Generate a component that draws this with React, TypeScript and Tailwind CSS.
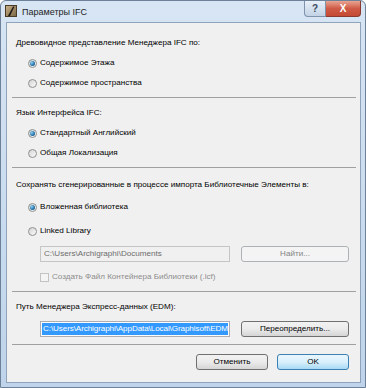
import React from "react";

const Radio = ({ checked, label }: { checked?: boolean; label: string }) => (
    <div className="h-[20px] flex items-center pl-[16px]">
        <span className="w-[9px] h-[9px] rounded-full border border-[#8e8f8f] bg-gradient-to-br from-[#d4d4d4] to-[#fbfbfb] flex items-center justify-center">
            {checked && (
                <span className="w-[5px] h-[5px] rounded-full bg-[radial-gradient(circle_at_35%_35%,#8fd0f2,#1d6fa5_60%,#0d3f66)]" />
            )}
        </span>
        <span className="ml-[3px] text-black">{label}</span>
    </div>
);

const Separator = ({ className }: { className: string }) => (
    <div className={"h-px bg-[#a0a0a0] " + className} />
);

const Btn = ({
    label,
    kind,
    className,
}: {
    label: string;
    kind: "normal" | "disabled" | "default";
    className: string;
}) => {
    const styles = {
        normal: "border-[#707070] bg-gradient-to-b from-[#f2f2f2] via-[#ebebeb] to-[#d5d5d5] text-black",
        disabled: "border-[#adb2b5] bg-[#f4f4f4] text-[#838383]",
        default: "border-[#3c7fb1] bg-gradient-to-b from-[#eaf6fd] via-[#d9f0fc] to-[#a7d9f5] text-black",
    };
    return (
        <div
            className={
                "h-[16px] rounded-[3px] border flex items-center justify-center " +
                styles[kind] +
                " " +
                className
            }
        >
            {label}
        </div>
    );
};

export default function App() {
    return (
        <div
            className="w-[366px] h-[388px] flex flex-col bg-gradient-to-b from-[#d7e5f4] to-[#bfd4ea] border border-[#6d8299] rounded-t-[6px] text-[8.1px]"
            style={{ fontFamily: '"Liberation Sans", Arial, sans-serif' }}
        >
            <div className="h-[21px] flex items-start shrink-0">
                <div className="mt-[4px] ml-[4px] w-[12px] h-[12px]">
                    <svg width="12" height="12" viewBox="0 0 12 12">
                        <defs>
                            <linearGradient id="ac" x1="0" y1="0" x2="1" y2="1">
                                <stop offset="0" stopColor="#c9b38a" />
                                <stop offset="1" stopColor="#7a6544" />
                            </linearGradient>
                        </defs>
                        <rect x="0.5" y="0.5" width="11" height="11" fill="url(#ac)" stroke="#4a3b26" />
                        <path d="M3 11 L8 1.5 L9.5 1.5 L5 11 Z" fill="#1e1a14" />
                    </svg>
                </div>
                <div className="ml-[5px] mt-[5px] text-[9px] text-[#1e1e1e]">Параметры IFC</div>
                <div className="ml-auto mr-[4px] flex">
                    <div className="w-[22px] h-[16px] border border-[#7f93ab] border-t-0 rounded-bl-[4px] bg-gradient-to-b from-[#e8f0f8] to-[#c3d3e5] flex items-center justify-center text-[10px] font-bold text-[#3b4a5e]">
                        ?
                    </div>
                    <div className="w-[35px] h-[16px] border border-[#8a3a2e] border-t-0 border-l-0 rounded-br-[4px] bg-gradient-to-b from-[#e8a493] via-[#cf5a45] to-[#c44a34] flex items-center justify-center text-[10px] font-bold text-white">
                        X
                    </div>
                </div>
            </div>

            <div className="ml-[5px] mr-[4px] h-[361px] border border-[#8fa3bb] bg-[#f0f0f0] flex flex-col pt-[10px] pl-[5px] pr-[4px]">
                <div className="h-[20px] flex items-center pl-[4px] text-black">
                    Древовидное представление Менеджера IFC по:
                </div>
                <Radio checked label="Содержимое Этажа" />
                <Radio label="Содержимое пространства" />
                <Separator className="mt-[4px]" />

                <div className="mt-[5px] h-[20px] flex items-center pl-[4px] text-black">
                    Язык Интерфейса IFC:
                </div>
                <Radio checked label="Стандартный Английский" />
                <Radio label="Общая Локализация" />
                <Separator className="mt-[4px]" />

                <div className="mt-[7px] h-[20px] flex items-center pl-[4px] text-black">
                    Сохранять сгенерированные в процессе импорта Библиотечные Элементы в:
                </div>
                <div className="mt-[2px]">
                    <Radio checked label="Вложенная библиотека" />
                </div>
                <div className="mt-[4px]">
                    <Radio label="Linked Library" />
                </div>
                <div className="mt-[5px] h-[16px] flex pl-[28px] pr-[7px]">
                    <div className="w-[190px] h-[16px] border border-[#c5c5c5] bg-[#f0f0f0] flex items-center pl-[3px] text-[#6d6d6d]">
                        C:\Users\Archigraphi\Documents
                    </div>
                    <Btn label="Найти..." kind="disabled" className="ml-auto w-[108px]" />
                </div>
                <div className="mt-[5px] h-[20px] flex items-center pl-[28px]">
                    <span className="w-[9px] h-[9px] border border-[#c3c3c3] bg-[#f4f4f4]" />
                    <span className="ml-[3px] text-[#8d8d8d]">Создать Файл Контейнера Библиотеки (.lcf)</span>
                </div>
                <Separator className="mt-[4px]" />

                <div className="mt-[5px] h-[20px] flex items-center pl-[4px] text-black">
                    Путь Менеджера Экспресс-данных (EDM):
                </div>
                <div className="mt-[4px] h-[16px] flex pl-[28px] pr-[7px]">
                    <div className="w-[190px] h-[16px] border border-[#abadb3] bg-white p-px flex">
                        <div className="flex-1 min-w-0 bg-[#3399ff] text-white flex items-center pl-[1px] overflow-hidden whitespace-nowrap tracking-[-0.1px]">
                            C:\Users\Archigraphi\AppData\Local\Graphisoft\EDM
                        </div>
                    </div>
                    <Btn label="Переопределить..." kind="normal" className="ml-auto w-[108px]" />
                </div>
                <Separator className="mt-[7px]" />

                <div className="mt-[9px] flex justify-end pr-[7px] gap-[9px]">
                    <Btn label="Отменить" kind="normal" className="w-[72px]" />
                    <Btn label="OK" kind="default" className="w-[72px]" />
                </div>
            </div>
        </div>
    );
}
